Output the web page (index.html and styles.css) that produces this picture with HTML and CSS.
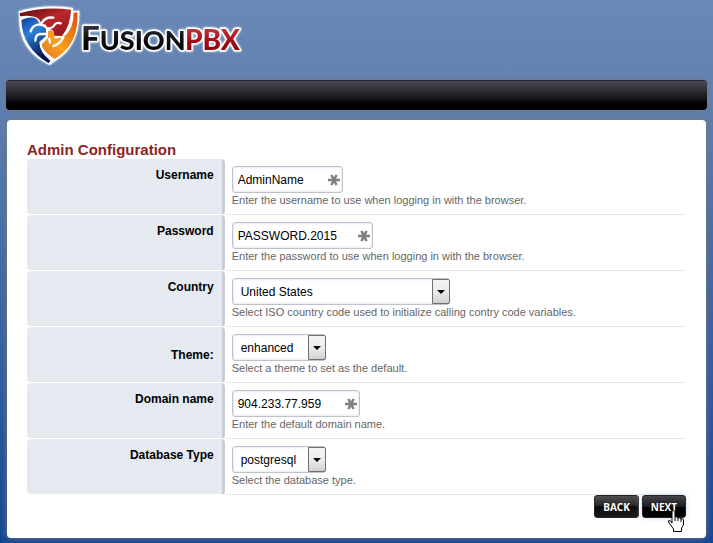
FILE: index.html
```html
<!DOCTYPE html>
<html lang="en">
<head>
<meta charset="utf-8">
<title>FusionPBX</title>
<link rel="stylesheet" href="styles.css">
</head>
<body>
<svg class="sprites" aria-hidden="true">
  <symbol id="asterisk" viewBox="0 0 12 12">
    <path d="M0 6h12M3.400 1l5.200 10M8.600 1l-5.200 10" stroke="#808080" stroke-width="2.6" fill="none"/>
  </symbol>
</svg>
<header class="brand">
  <svg class="logo" viewBox="0 0 250 80" role="img" aria-label="FusionPBX">
    <defs>
      <linearGradient id="red" x1="0" y1="0" x2="1" y2="1"><stop offset="0" stop-color="#5d0d12"/><stop offset=".5" stop-color="#b8282a"/><stop offset="1" stop-color="#8c1519"/></linearGradient>
      <linearGradient id="blue" x1="0" y1="0" x2="0.4" y2="1"><stop offset="0" stop-color="#123f94"/><stop offset=".4" stop-color="#2d80dc"/><stop offset="1" stop-color="#04104c"/></linearGradient>
      <linearGradient id="gold" x1="1" y1="0" x2="0" y2="1"><stop offset="0" stop-color="#d8520f"/><stop offset=".6" stop-color="#f9a01c"/><stop offset="1" stop-color="#e1762b"/></linearGradient>
      <linearGradient id="ink" x1="0" y1="0" x2="0" y2="1"><stop offset="0" stop-color="#45454f"/><stop offset=".6" stop-color="#0a0a0f"/><stop offset="1" stop-color="#000"/></linearGradient>
      <linearGradient id="wine" x1="0" y1="0" x2="0" y2="1"><stop offset="0" stop-color="#d04a50"/><stop offset=".55" stop-color="#a30e14"/><stop offset="1" stop-color="#7c0007"/></linearGradient>
    </defs>
    <g transform="scale(.3333)">
      <path d="M56 34Q130 12 219 24L218 34L238 32Q240 140 164 184L149 195Q54 150 58 52Z" fill="#fff"/>
      <path d="M59 40Q130 18 213 29Q212 76 186 108L162 107L160 92L140 80L122 66Q112 42 60 49Z" fill="url(#red)"/>
      <path d="M64 60Q108 42 117 68L138 86L138 108L118 126Q118 156 151 182L146 190Q66 142 64 60Z" fill="url(#blue)"/>
      <path d="M221 38L232 37Q238 134 164 177Q122 148 126 132L144 114L144 94Q154 86 162 96L164 116L190 112Q222 86 221 38Z" fill="url(#gold)"/>
      <g fill="none" stroke="#fff" stroke-width="7" stroke-linecap="round">
        <path d="M126 68Q136 50 160 53"/>
        <path d="M146 85Q160 84 164 74Q170 66 182 70"/>
        <path d="M92 94Q98 74 118 73L136 78"/>
        <path d="M106 122Q106 104 120 102L138 102"/>
        <path d="M160 138Q178 134 190 112"/>
        <path d="M148 116L150 128"/>
      </g>
    </g>
    <g class="wordmark">
      <text x="81" y="50" fill="url(#ink)"><tspan class="cap">F</tspan><tspan>USION</tspan></text>
      <text class="accent" x="185" y="50" fill="url(#wine)">PBX</text>
    </g>
  </svg>
</header>
<nav class="menu" aria-label="Main"></nav>
<main class="panel">
  <form>
    <h1>Admin Configuration</h1>
    <div class="row">
      <label for="username">Username</label>
      <div class="field">
        <div class="control w-user"><input id="username" type="text" value="AdminName" required><svg class="mark"><use href="#asterisk"/></svg></div>
        <p>Enter the username to use when logging in with the browser.</p>
      </div>
    </div>
    <div class="row">
      <label for="password">Password</label>
      <div class="field">
        <div class="control w-pass"><input id="password" type="text" value="PASSWORD.2015" required><svg class="mark"><use href="#asterisk"/></svg></div>
        <p>Enter the password to use when logging in with the browser.</p>
      </div>
    </div>
    <div class="row">
      <label for="country">Country</label>
      <div class="field">
        <div class="control w-country"><select id="country"><option>United States</option></select><span class="arrow"></span></div>
        <p>Select ISO country code used to initialize calling contry code variables.</p>
      </div>
    </div>
    <div class="row middle">
      <label for="theme">Theme:</label>
      <div class="field">
        <div class="control w-theme"><select id="theme"><option>enhanced</option></select><span class="arrow"></span></div>
        <p>Select a theme to set as the default.</p>
      </div>
    </div>
    <div class="row">
      <label for="domain">Domain name</label>
      <div class="field">
        <div class="control w-domain"><input id="domain" type="text" value="904.233.77.959" required><svg class="mark"><use href="#asterisk"/></svg></div>
        <p>Enter the default domain name.</p>
      </div>
    </div>
    <div class="row">
      <label for="database">Database Type</label>
      <div class="field">
        <div class="control w-theme"><select id="database"><option>postgresql</option></select><span class="arrow"></span></div>
        <p>Select the database type.</p>
      </div>
    </div>
    <div class="actions">
      <button type="button">BACK</button>
      <button type="submit" class="active">NEXT
        <svg class="pointer" viewBox="0 0 18 24" aria-hidden="true"><path d="M5 14V2.500Q6.500 0 8 2.500V8Q9.500 7 11 9Q12.500 8 14 10Q16 9 16.500 11V16L14.500 19V22.500H6.500V20L1.500 13Q1 10.500 3.500 12Z" fill="#fff" stroke="#000"/><path d="M8 8v4M11 9v3M14 10v3" stroke="#000" fill="none"/></svg>
      </button>
    </div>
  </form>
</main>
</body>
</html>
```
FILE: styles.css
```css
* { box-sizing: border-box; }
html { min-height: 100%; background: linear-gradient(#6b89b7 0, #6080b0 100px, #5b7cae 130px, #144794 100%); }
body { margin: 0; padding: 0 6px 5px; font-family: "Liberation Sans", Arial, sans-serif; font-size: 12px; color: #000; }
.sprites { display: none; }
.brand { height: 80px; margin: 0 -6px; }
.logo { display: block; width: 250px; height: 80px; filter: drop-shadow(0 0 1px #fff); }
.wordmark { font-family: Lato, sans-serif; font-weight: 900; font-size: 27px; stroke: #fff; stroke-width: 3px; stroke-linejoin: round; paint-order: stroke; }
.cap { font-size: 33px; }
.accent { font-size: 28px; }
.menu { height: 30px; border-radius: 4px; border-top: 1px solid #262630; background: linear-gradient(#4b4954, #24232a 45%, #000 80%); box-shadow: 0 0 4px #777; }
.panel { margin: 10px 1px 0; padding: 20px; border-radius: 4px; background: #fff; box-shadow: 0 0 6px #777; }
h1 { margin: 0; font-size: 15px; line-height: 19px; color: #8c2424; }
.row { display: flex; height: 56px; }
.row label { width: 30%; padding: 9px 8px 0 0; font-weight: bold; line-height: 14px; text-align: right; background: #e5e9f0; border-right: 3px solid #c9cdd5; border-radius: 4px; border-bottom: 1px solid #fff; background-clip: padding-box; }
.row.middle label { padding-top: 21px; }
.field { flex: 1; padding: 7px 7px 0; border-bottom: 1px solid #e5e9f0; }
.control { position: relative; height: 27px; }
.control input, .control select { width: 100%; height: 27px; padding: 0 5px; appearance: none; font: 12px "Liberation Sans", Arial, sans-serif; color: #000; background: #fff; border: 1px solid #c0c2ca; border-radius: 3px; box-shadow: 0 0 3px #cddbf0 inset; }
.control select { padding-left: 8px; }
.mark { position: absolute; right: 3px; top: 8px; width: 12px; height: 12px; }
.arrow { position: absolute; right: 0; top: 1px; width: 18px; height: 25px; border: 1px solid #707070; border-radius: 0 2px 2px 0; background: linear-gradient(#f4f4f4, #ececec 50%, #d2d2d2); pointer-events: none; }
.arrow::after { content: ""; position: absolute; left: 4px; top: 10px; border: 4px solid transparent; border-top-color: #000; border-bottom: 0; }
.w-user { width: 111px; }
.w-pass { width: 141px; }
.w-country { width: 218px; }
.w-theme { width: 94px; }
.w-domain { width: 128px; }
.field p { margin: 0; font-size: 11px; line-height: 15px; color: #666; white-space: nowrap; }
.actions { display: flex; justify-content: flex-end; gap: 3px; }
button { position: relative; height: 23px; padding: 0 8px; font: bold 10px "Open Sans", sans-serif; color: #fff; border: 1px solid #242424; border-radius: 3px; background: linear-gradient(#4f4f4f, #292929 45%, #0b0b0b 50%, #1c1c1c); }
button.active { background: linear-gradient(#45434b, #1b1a1f 50%, #000 55%); box-shadow: 0 0 6px #cddbf0; }
.pointer { position: absolute; right: 0; top: 13px; width: 18px; height: 24px; }
```
